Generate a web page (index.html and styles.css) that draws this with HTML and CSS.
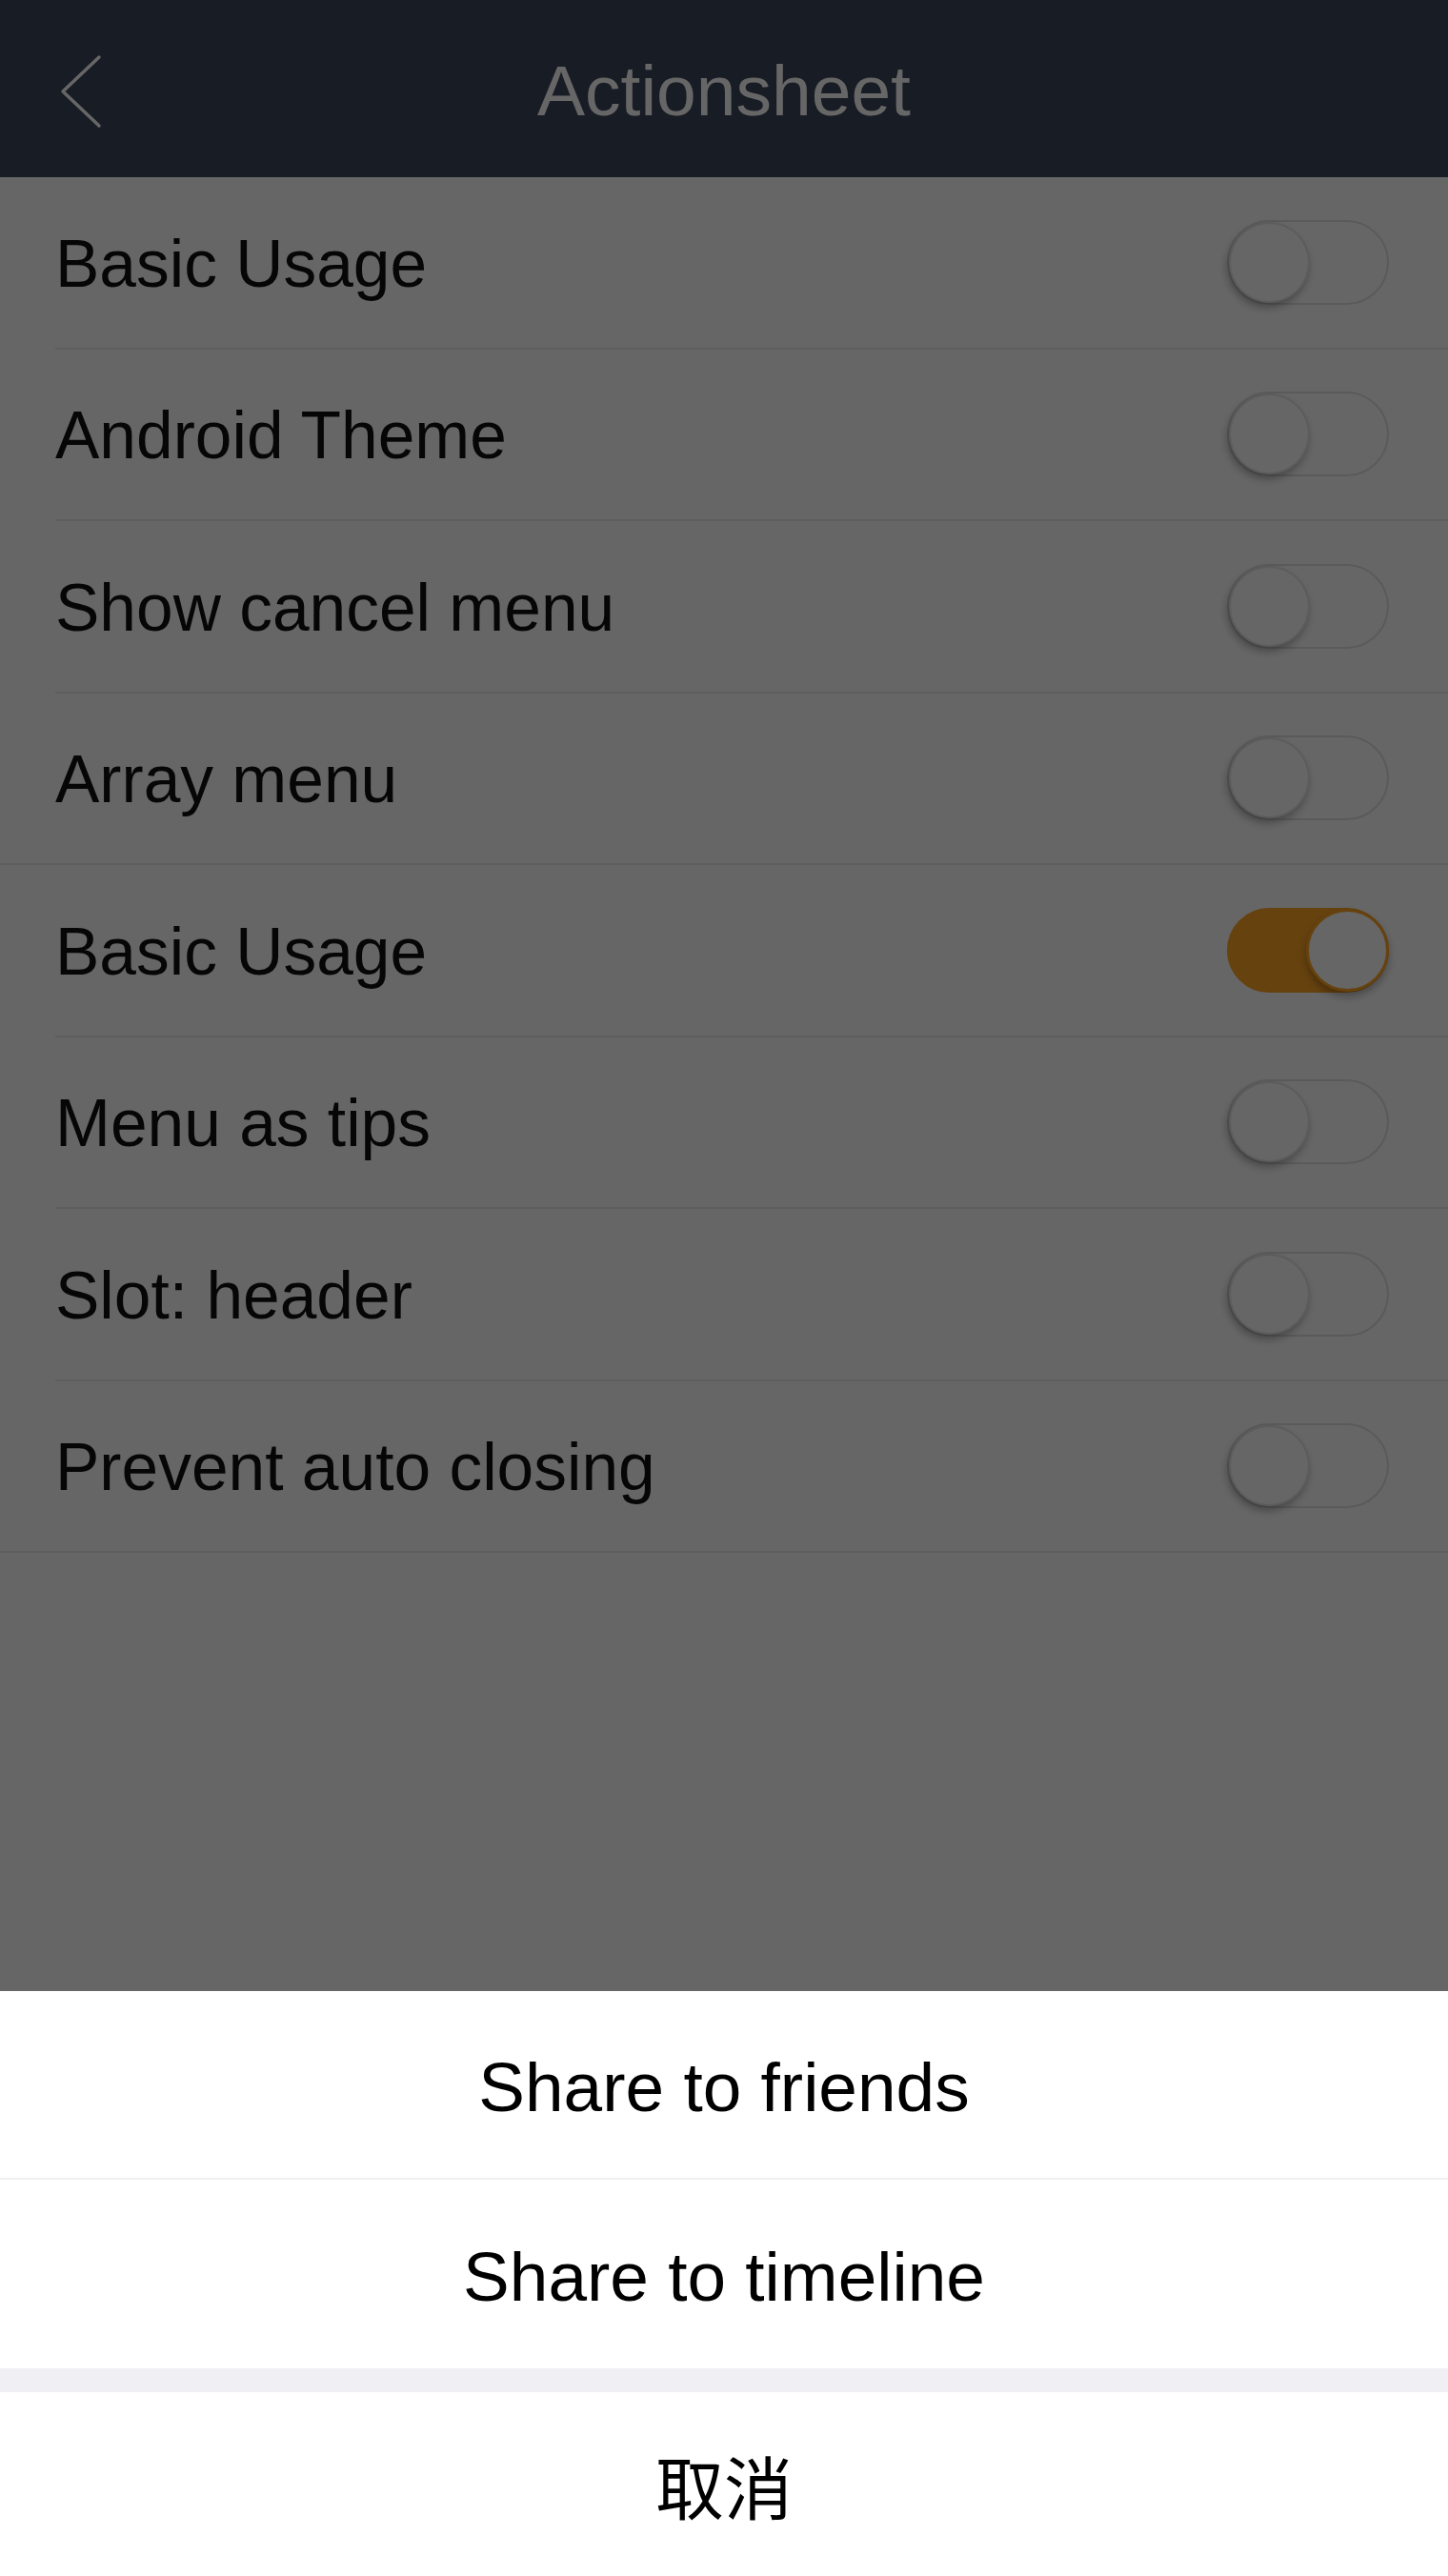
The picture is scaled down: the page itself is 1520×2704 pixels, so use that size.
FILE: index.html
```html
<!DOCTYPE html>
<html lang="en">
<head>
<meta charset="utf-8">
<title>Actionsheet</title>
<link rel="stylesheet" href="styles.css">
</head>
<body>
<header class="navbar">
  <div class="nav-left">
    <svg class="back" width="46" height="80" viewBox="0 0 46 80" aria-hidden="true">
      <path d="M42 4 L4 40 L42 76" fill="none" stroke="#ffffff" stroke-width="3.5" stroke-linecap="round" stroke-linejoin="round"/>
    </svg>
  </div>
  <h1 class="nav-title">Actionsheet</h1>
  <div class="nav-right"></div>
</header>

<main class="content">
  <section class="group">
    <div class="row"><span class="label">Basic Usage</span><span class="switch"><span class="knob"></span></span></div>
    <div class="row"><span class="label">Android Theme</span><span class="switch"><span class="knob"></span></span></div>
    <div class="row"><span class="label">Show cancel menu</span><span class="switch"><span class="knob"></span></span></div>
    <div class="row"><span class="label">Array menu</span><span class="switch"><span class="knob"></span></span></div>
  </section>
  <section class="group">
    <div class="row"><span class="label">Basic Usage</span><span class="switch on"><span class="knob"></span></span></div>
    <div class="row"><span class="label">Menu as tips</span><span class="switch"><span class="knob"></span></span></div>
    <div class="row"><span class="label">Slot: header</span><span class="switch"><span class="knob"></span></span></div>
    <div class="row"><span class="label">Prevent auto closing</span><span class="switch"><span class="knob"></span></span></div>
  </section>
</main>

<div class="mask"></div>

<div class="sheet">
  <div class="sheet-menu">
    <div class="sheet-item">Share to friends</div>
    <div class="sheet-item">Share to timeline</div>
  </div>
  <div class="sheet-gap"></div>
  <div class="sheet-cancel">取消</div>
</div>
</body>
</html>
```
FILE: styles.css
```css
html, body {
  margin: 0;
  padding: 0;
}
body {
  width: 1520px;
  min-height: 2704px;
  background: #ffffff;
  font-family: "Liberation Sans", Arial, "Noto Sans CJK SC", sans-serif;
  color: #111111;
}

.navbar {
  height: 186px;
  background: #3c465a;
  display: grid;
  grid-template-columns: 1fr auto 1fr;
  align-items: center;
}
.nav-left {
  display: flex;
  align-items: center;
  padding-left: 62px;
}
.back {
  display: block;
  margin-top: 4px;
}
.nav-title {
  margin: 0;
  font-size: 75px;
  font-weight: normal;
  line-height: 186px;
  padding-top: 2px;
  color: #ffffff;
}

.group {
  border-bottom: 2px solid #ececec;
}
.row {
  height: 180.5px;
  box-sizing: border-box;
  margin-left: 58px;
  padding-right: 62px;
  display: flex;
  align-items: center;
  justify-content: space-between;
  border-bottom: 2px solid #ececec;
}
.group .row:last-child {
  border-bottom: none;
  height: 178.5px;
}
.label {
  font-size: 69.5px;
  line-height: 1;
  padding-top: 4px;
}

.switch {
  width: 170px;
  height: 89px;
  box-sizing: border-box;
  border: 2px solid #e2e2e2;
  border-radius: 45px;
  background: #ffffff;
  display: flex;
  align-items: center;
  justify-content: flex-start;
}
.knob {
  width: 85px;
  height: 85px;
  border-radius: 50%;
  background: #ffffff;
  box-sizing: border-box;
  border: 2px solid rgba(0, 0, 0, 0.1);
  box-shadow: -2px 5px 9px rgba(0, 0, 0, 0.3);
}
.switch.on {
  background: #ffa526;
  border-color: #ffa526;
  justify-content: flex-end;
}
.switch.on .knob {
  width: 87px;
  height: 87px;
  margin-right: -2px;
  border: 3px solid #ffa526;
  box-shadow: 0 5px 9px rgba(0, 0, 0, 0.3);
}

.mask {
  position: fixed;
  inset: 0;
  background: rgba(0, 0, 0, 0.6);
  z-index: 10;
}

.sheet {
  position: fixed;
  left: 0;
  right: 0;
  bottom: 0;
  z-index: 20;
  background: #efeff4;
}
.sheet-menu {
  background: #ffffff;
}
.sheet-item {
  height: 198px;
  box-sizing: border-box;
  display: flex;
  align-items: center;
  justify-content: center;
  font-size: 73px;
  color: #000000;
  border-bottom: 2px solid #f0f0f0;
  padding-top: 4px;
}
.sheet-item:last-child {
  border-bottom: none;
}
.sheet-gap {
  height: 25px;
  background: #efeff4;
}
.sheet-cancel {
  height: 193px;
  background: #ffffff;
  display: flex;
  align-items: center;
  justify-content: center;
  font-size: 72px;
  color: #000000;
  font-family: "Noto Sans CJK SC", "Liberation Sans", sans-serif;
  padding-top: 0;
  box-sizing: border-box;
}
```
